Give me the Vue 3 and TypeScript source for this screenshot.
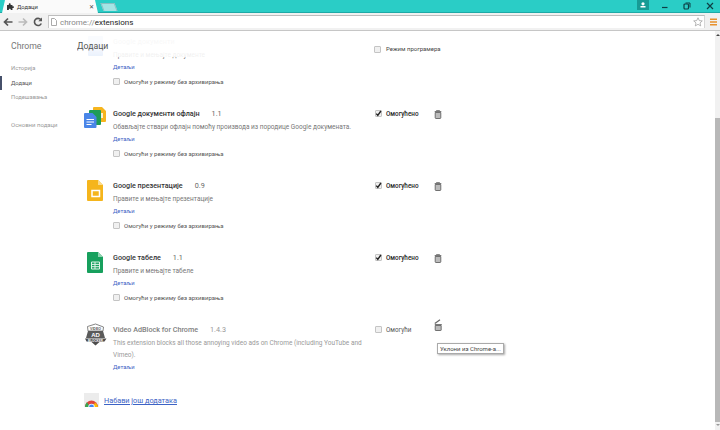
<script setup lang="ts">
interface Ext {
  name: string
  ver: string
  desc: string
  icon: string
  on: boolean
  incog: boolean
  ctl: boolean
}
const nav = ['Историја', 'Додаци', 'Подешавања']
const exts: Ext[] = [
  { name: 'Google документи', ver: '', desc: 'Правите и мењајте документе', icon: 'faint', on: true, incog: true, ctl: false },
  { name: 'Google документи офлајн', ver: '1.1', desc: 'Обављајте ствари офлајн помоћу производа из породице Google докумената.', icon: 'docs', on: true, incog: true, ctl: true },
  { name: 'Google презентације', ver: '0.9', desc: 'Правите и мењајте презентације', icon: 'slides', on: true, incog: true, ctl: true },
  { name: 'Google табеле', ver: '1.1', desc: 'Правите и мењајте табеле', icon: 'sheets', on: true, incog: true, ctl: true },
  { name: 'Video AdBlock for Chrome', ver: '1.4.3', desc: 'This extension blocks all those annoying video ads on Chrome (including YouTube and Vimeo).', icon: 'adblock', on: false, incog: false, ctl: true }
]
</script>

<template>
  <div class="browser">
    <header class="strip">
      <div class="tab">
        <svg class="puzzle" width="7" height="7" viewBox="0 0 9 9"><path d="M0 2.500h2.300C2 1 2.700.3 3.500.3s1.500.7 1.200 2.200H7v1.900c1.200-.3 2-.1 2 .9s-.8 1.300-2 1V9H4.800c.2-1.200-.3-1.700-1.200-1.700S2.200 7.800 2.400 9H0z" fill="#333"/></svg>
        <span class="tab-title">Додаци</span>
        <span class="tab-x">✕</span>
      </div>
      <div class="newtab"></div>
      <div class="strip-space"></div>
      <div class="profile">
        <svg width="6" height="6" viewBox="0 0 6 6"><circle cx="3" cy="1.800" r="1.600" fill="#fff"/><rect x="0.500" y="4" width="5" height="1.500" fill="#fff"/></svg>
      </div>
      <div class="winctl">
        <svg width="7" height="7" viewBox="0 0 7 7"><path d="M1 4.500h5.500" stroke="#0d3f45" stroke-width="1.200"/></svg>
        <svg width="8" height="8" viewBox="0 0 8 8"><rect x="1" y="2" width="4.500" height="5" rx="1" fill="none" stroke="#0d3f45" stroke-width="1.200"/><path d="M2.500 1h4.500v4.500" fill="none" stroke="#0d3f45" stroke-width="1"/></svg>
        <svg width="8" height="8" viewBox="0 0 8 8"><path d="M1 1l6 6M7 1l-6 6" stroke="#0d3f45" stroke-width="1.200"/></svg>
      </div>
    </header>

    <nav class="toolbar">
      <svg class="tool" width="10" height="10" viewBox="0 0 10 10"><path d="M9.500 5H2M5 1.500L1.500 5 5 8.500" fill="none" stroke="#555" stroke-width="1.700"/></svg>
      <svg class="tool" width="10" height="10" viewBox="0 0 10 10"><path d="M.5 5H8M5 1.500L8.500 5 5 8.500" fill="none" stroke="#bbb" stroke-width="1.700"/></svg>
      <svg class="tool" width="10" height="10" viewBox="0 0 10 10"><path d="M8.300 6.500A3.600 3.600 0 1 1 7.800 2.600" fill="none" stroke="#555" stroke-width="1.600"/><path d="M9 .5V4.200H5.300z" fill="#555"/></svg>
      <div class="omnibox">
        <svg class="pageicon" width="6" height="8" viewBox="0 0 6 8"><path d="M.5.500h3l2 2v5h-5z" fill="#fff" stroke="#aaa"/></svg>
        <span class="url"><span class="scheme">chrome://</span>extensions</span>
        <svg class="star" width="10" height="10" viewBox="0 0 10 10"><path d="M5 .8l1.300 2.800 3 .3-2.300 2 .7 3L5 7.300 2.300 8.900l.7-3-2.300-2 3-.3z" fill="#fff" stroke="#999" stroke-width=".7"/></svg>
      </div>
      <svg class="menu" width="7" height="8" viewBox="0 0 7 8"><path d="M0 1.200h7M0 4h7M0 6.800h7" stroke="#e8912d" stroke-width="1.400"/></svg>
    </nav>

    <div class="page">
      <aside class="side">
        <h1 class="side-title">Chrome</h1>
        <ul class="side-nav">
          <li v-for="n in nav" :key="n" :class="{ active: n === 'Додаци' }">{{ n }}</li>
        </ul>
        <div class="side-about">Основни подаци</div>
      </aside>

      <main class="main">
        <div class="head">
          <h2 class="head-title">Додаци</h2>
          <label class="devmode"><span class="box"></span>Режим програмера</label>
        </div>

        <section
          v-for="e in exts"
          :key="e.name"
          class="ext"
          :class="{ off: !e.on }"
        >
          <div class="ext-icon">
            <svg v-if="e.icon === 'faint'" width="22" height="22" viewBox="0 0 22 22"><rect x="4" y="1" width="15" height="20" rx="1" fill="#4a86e8"/></svg>
            <svg v-else-if="e.icon === 'docs'" width="23" height="22" viewBox="0 0 23 22">
              <path d="M9 1a1 1 0 0 1 1-1h8l4 4v10a1 1 0 0 1-1 1H10a1 1 0 0 1-1-1z" fill="#f6b51e"/>
              <rect x="15" y="6" width="4" height="5" fill="#fff" opacity=".8"/>
              <rect x="5" y="3" width="12" height="15" rx="1" fill="#1e9c58"/>
              <path d="M0 7a1 1 0 0 1 1-1h7.500l4 4v10a1 1 0 0 1-1 1H1a1 1 0 0 1-1-1z" fill="#4a86e8"/>
              <path d="M2.500 12.500h7.500M2.500 15h7.500M2.500 17.500h5" stroke="#fff" stroke-width="1"/>
            </svg>
            <svg v-else-if="e.icon === 'slides'" width="24" height="24" viewBox="0 -1 24 24">
              <path d="M3 1a1 1 0 0 1 1-1h10l5 5v15a1 1 0 0 1-1 1H4a1 1 0 0 1-1-1z" fill="#f5b51c"/>
              <path d="M14 0l5 5h-5z" fill="#fbdc8c"/>
              <rect x="8" y="10.500" width="7.500" height="6" fill="none" stroke="#fff" stroke-width="1.500"/>
            </svg>
            <svg v-else-if="e.icon === 'sheets'" width="24" height="24" viewBox="0 -1 24 24">
              <path d="M3 1a1 1 0 0 1 1-1h10l5 5v15a1 1 0 0 1-1 1H4a1 1 0 0 1-1-1z" fill="#17a05d"/>
              <path d="M14 0l5 5h-5z" fill="#8fd3b0"/>
              <path d="M7.500 10h8v7h-8zM7.500 12.400h8M7.500 14.700h8M11 10v7" fill="none" stroke="#dff3e8" stroke-width="1"/>
            </svg>
            <svg v-else width="24" height="24" viewBox="0 0 24 24">
              <path d="M4 2.500l8-2 8 2 1.500 6-1 1 2 5-5 1.500v2l-5 1-2 3-2-3-5-1v-2l-5-1.500 2-5-1-1z" fill="#fff"/>
              <path d="M3.500 3.500l8-2.500 8 3-.5 4-15 0z" fill="none" stroke="#777" stroke-width=".9"/>
              <text x="11.500" y="6.600" text-anchor="middle" class="adtop">VIDEO</text>
              <path d="M4 8h15l2 7H2z" fill="#5a5a5a"/>
              <text x="11.500" y="14.200" text-anchor="middle" class="adtxt">AD</text>
              <path d="M1 15.500h21.500l-2 3-5 .5-4 3.500-4-3.500-5-.5z" fill="#4c4c4c"/>
              <text x="11.500" y="18.500" text-anchor="middle" class="adbot">BLOCKER</text>
            </svg>
          </div>
          <div class="ext-body">
            <div class="ext-title">
              <span class="ext-name">{{ e.name }}</span>
              <span class="ext-ver">{{ e.ver }}</span>
            </div>
            <p class="ext-desc">{{ e.desc }}</p>
            <a class="ext-link">Детаљи</a>
            <label v-if="e.incog" class="incog"><span class="box"></span>Омогући у режиму без архивирања</label>
          </div>
          <div v-if="e.ctl" class="ext-ctl">
            <span class="box" :class="{ checked: e.on }">
              <svg v-if="e.on" width="7" height="7" viewBox="0 0 7 7"><path d="M1.300 3.600l1.500 1.800L5.900 1" fill="none" stroke="#222" stroke-width="1.400"/></svg>
            </span>
            <span class="state">{{ e.on ? 'Омогућено' : 'Омогући' }}</span>
            <span class="trash">
              <svg v-if="e.on" width="8" height="9" viewBox="0 0 8 9"><path d="M.7 1.500h6.600M1.200 2.500h5.600V7.700a.8.8 0 0 1-.8.800H2a.8.8 0 0 1-.8-.8z" fill="#bbb" stroke="#555" stroke-width=".8"/><path d="M2.500 1V.5h3V1" fill="none" stroke="#555" stroke-width=".7"/></svg>
              <svg v-else width="9" height="12" viewBox="0 0 9 12"><path d="M.8 4.500L6 .8" stroke="#666" stroke-width="1.200"/><path d="M.8 5.500h7M1.200 6.500h6v4.500a.5.5 0 0 1-.5.500H1.700a.5.5 0 0 1-.5-.5z" fill="#bbb" stroke="#555" stroke-width=".8"/></svg>
            </span>
            <div v-if="!e.on" class="tooltip">Уклони из Chrome-а...</div>
          </div>
        </section>

        <div class="more">
          <svg width="15" height="14" viewBox="0 0 15 14">
            <rect x="0" y="0" width="15" height="14" fill="#ececec"/>
            <path d="M1 14a6.500 6.500 0 0 1 13 0z" fill="#e0453a"/>
            <path d="M1 14a6.500 6.500 0 0 1 2-4.700L6 14z" fill="#34a853"/>
            <path d="M9 14l2-4.500a6.500 6.500 0 0 1 3 4.500z" fill="#fbbc05"/>
            <circle cx="7.500" cy="14" r="3.200" fill="#fff"/>
            <circle cx="7.500" cy="14" r="2.400" fill="#4285f4"/>
          </svg>
          <a class="more-link">Набави још додатака</a>
        </div>
      </main>

      <div class="scroll">
        <div class="arrow up"></div>
        <div class="thumb"></div>
        <div class="arrow down"></div>
      </div>
    </div>
  </div>
</template>

<style>
html, body { margin: 0; background: #fff; overflow: hidden; }
</style>

<style scoped>
.browser {
  width: 720px;
  height: 430px;
  display: flex;
  flex-direction: column;
  overflow: hidden;
  font-family: Roboto, "Liberation Sans", sans-serif;
  color: #333;
}
svg { display: block; flex: none; }
.strip {
  height: 13px;
  flex: none;
  display: flex;
  align-items: flex-start;
  background: #2acdc6;
  border-bottom: 1px solid #1fa9a6;
  box-sizing: border-box;
}
.tab {
  width: 96px;
  height: 13px;
  margin-left: 2px;
  background: #fafafa;
  display: flex;
  align-items: center;
  gap: 3px;
  padding: 0 3px;
  box-sizing: border-box;
  clip-path: polygon(0 100%, 3px 0, calc(100% - 3px) 0, 100% 100%);
}
.puzzle { margin-left: 2px; }
.tab-title { font-size: 5.800px; flex: 1; color: #333; }
.tab-x { font-size: 6px; color: #444; margin-right: 1px; }
.newtab {
  width: 14px;
  height: 8px;
  margin: 3px 0 0 4px;
  background: #a4e4e4;
  border: 1px solid #8abfc3;
  border-bottom: 0;
  box-sizing: border-box;
  transform: skewX(20deg);
}
.strip-space { flex: 1; }
.profile {
  width: 12px;
  height: 9.500px;
  background: #179b95;
  display: flex;
  justify-content: center;
  align-items: center;
  margin-right: 12px;
}
.winctl {
  width: 59px;
  display: flex;
  justify-content: space-between;
  align-items: center;
  padding: 2px 6px 0 0;
  box-sizing: border-box;
}
.toolbar {
  height: 18px;
  flex: none;
  background: #f1f1f1;
  border-bottom: 1px solid #c6c6c6;
  display: flex;
  align-items: center;
  padding: 0 2px 0 3px;
  gap: 5px;
  box-sizing: border-box;
}
.omnibox {
  flex: 1;
  height: 13px;
  background: #fff;
  border-top: 1px solid #bdbdbd;
  border-left: 1px solid #c8c8c8;
  border-right: 1px solid #d6d6d6;
  display: flex;
  align-items: center;
  gap: 3px;
  padding: 0 1px 0 2px;
  box-sizing: border-box;
}
.url { flex: 1; font-size: 8px; color: #222; }
.scheme { color: #888; }
.menu { margin-right: 1px; }
.page {
  flex: 1;
  display: flex;
  min-height: 0;
  background: #fff;
}
.side {
  width: 77px;
  flex: none;
  box-sizing: border-box;
  padding-top: 9px;
}
.side-title {
  margin: 0 0 8px 11px;
  font-size: 8.700px;
  line-height: 13px;
  font-weight: 400;
  color: #777;
}
.side-nav {
  list-style: none;
  margin: 0;
  padding: 0;
}
.side-nav li {
  height: 14.500px;
  line-height: 14.500px;
  padding-left: 11px;
  font-size: 5.800px;
  color: #999;
}
.side-nav li.active {
  color: #555;
  border-left: 2px solid #46506a;
  padding-left: 9px;
}
.side-about {
  margin: 15px 0 0 11px;
  font-size: 6px;
  line-height: 10px;
  color: #999;
}
.main {
  flex: 1;
  position: relative;
  overflow: hidden;
  padding-top: 5px;
}
.head {
  position: absolute;
  left: 0;
  right: 0;
  top: 0;
  height: 26px;
  background: linear-gradient(rgba(255, 255, 255, .97) 55%, rgba(255, 255, 255, .88));
  display: flex;
  align-items: flex-start;
  z-index: 1;
}
.head-title {
  margin: 8px 0 0;
  width: 297px;
  font-size: 8.700px;
  line-height: 14px;
  font-weight: 400;
  color: #555;
}
.devmode {
  display: flex;
  align-items: center;
  gap: 5px;
  font-size: 6px;
  line-height: 10px;
  color: #444;
  margin-top: 13px;
}
.box {
  display: inline-flex;
  align-items: center;
  justify-content: center;
  width: 7px;
  height: 7px;
  flex: none;
  box-sizing: border-box;
  background: #f0f0f0;
  border: 1px solid #c4c4c4;
  border-radius: 1px;
}
.ext {
  height: 72px;
  display: flex;
  box-sizing: border-box;
}
.ext-icon {
  width: 36px;
  flex: none;
  padding-left: 7px;
  box-sizing: border-box;
  margin-top: -1px;
}
.ext-body {
  width: 262px;
  flex: none;
  box-sizing: border-box;
}
.ext-title {
  height: 12.500px;
  line-height: 12px;
  display: flex;
  gap: 12px;
  font-size: 7.200px;
}
.ext-name { font-weight: 500; color: #333; }
.ext-ver { color: #666; }
.off .ext-name { color: #808080; }
.off .ext-ver, .off .ext-desc { color: #999; }
.ext-desc {
  margin: 0;
  font-size: 6.500px;
  line-height: 12px;
  color: #777;
}
.ext-link {
  display: block;
  font-size: 5.800px;
  line-height: 12px;
  color: #3d63c5;
}
.incog {
  display: flex;
  align-items: center;
  gap: 4px;
  margin: 2.500px 0 0 0;
  height: 12px;
  font-size: 6px;
  color: #555;
}
.ext-ctl {
  position: relative;
  display: flex;
  align-items: flex-start;
}
.ext-ctl .box { margin-top: 2px; }
.state {
  width: 48px;
  margin-left: 4px;
  font-size: 6.300px;
  line-height: 12px;
  font-weight: 500;
  color: #222;
}
.off .state { font-weight: 400; color: #555; }
.trash { display: block; margin-top: 2px; }
.off .trash { margin-top: -5px; }
.tooltip {
  position: absolute;
  left: 62px;
  top: 19px;
  white-space: nowrap;
  height: 9px;
  line-height: 9px;
  padding: 0 2px;
  font-size: 6px;
  color: #444;
  background: #fff;
  border: 1px solid #aaa;
  box-shadow: 1px 1px 2px rgba(0, 0, 0, .35);
  z-index: 2;
}
.more {
  position: absolute;
  left: 7px;
  top: 362px;
  display: flex;
  align-items: flex-start;
  gap: 5px;
}
.more-link {
  margin-top: 1px;
  font-size: 7.300px;
  line-height: 13px;
  color: #3d63c5;
  text-decoration: underline;
}
.adtxt { font: 700 6px "Liberation Sans", sans-serif; fill: #fff; }
.adtop { font: 700 3.500px "Liberation Sans", sans-serif; fill: #555; }
.adbot { font: 700 3px "Liberation Sans", sans-serif; fill: #fff; }
.scroll {
  width: 5px;
  flex: none;
  background: #f1f1f1;
  display: flex;
  flex-direction: column;
  align-items: center;
}
.thumb {
  width: 100%;
  height: 304px;
  background: #b8b8b8;
  margin-top: 82px;
  margin-bottom: 2px;
}
.arrow { width: 0; height: 0; border-left: 2px solid transparent; border-right: 2px solid transparent; }
.arrow.up { border-bottom: 2px solid #444; margin-top: 3px; }
.arrow.down { border-top: 2px solid #999; }
</style>
